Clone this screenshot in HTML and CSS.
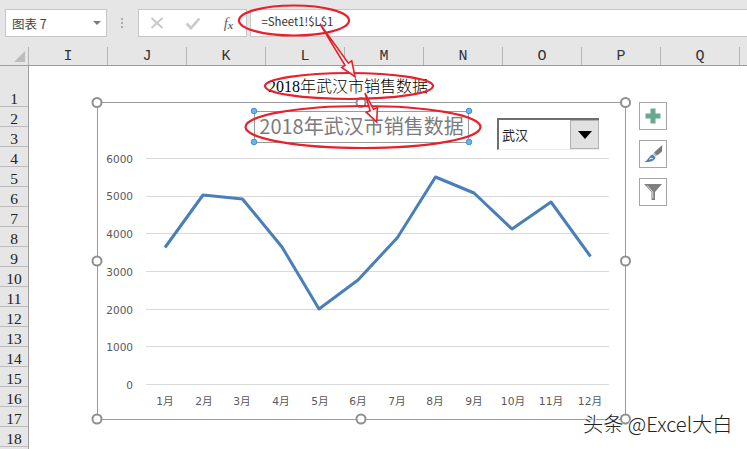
FILE: index.html
```html
<!DOCTYPE html>
<html lang="zh-CN">
<head>
<meta charset="utf-8">
<title>图表 7</title>
<link rel="stylesheet" href="styles.css">
</head>
<body>
<div class="app">
  <header class="toolbar">
    <div class="namebox"><span>图表 7</span><i class="caret"></i></div>
    <div class="grip"><i></i><i></i><i></i></div>
    <div class="fxgroup">
      <svg class="tool-icon" width="14" height="14" viewBox="0 0 14 14"><path d="M1.5 2 L12.5 12 M12.5 2 L1.5 12" stroke="#c9c9c9" stroke-width="2" fill="none"/></svg>
      <svg class="tool-icon" width="16" height="14" viewBox="0 0 16 14"><path d="M1.5 7.5 L6 12 L14.5 2.5" stroke="#c9c9c9" stroke-width="2.6" fill="none"/></svg>
      <span class="fx">f<sub>x</sub></span>
    </div>
    <div class="formula">=Sheet1!$L$1</div>
  </header>
  <div class="colhead">
    <div class="corner"><i></i></div>
    <div class="col">I</div><div class="col">J</div><div class="col">K</div><div class="col">L</div><div class="col">M</div><div class="col">N</div><div class="col">O</div><div class="col">P</div><div class="col">Q</div>
  </div>
  <div class="main">
    <div class="rowhead">
      <div class="row first">1</div><div class="row">2</div><div class="row">3</div><div class="row">4</div><div class="row">5</div><div class="row">6</div><div class="row">7</div><div class="row">8</div><div class="row">9</div><div class="row">10</div><div class="row">11</div><div class="row">12</div><div class="row">13</div><div class="row">14</div><div class="row">15</div><div class="row">16</div><div class="row">17</div><div class="row">18</div>
    </div>
    <div class="sheet">
      <div class="cell-title">2018年武汉市销售数据</div>
      <div class="chart">
        <svg class="chart-svg" width="550" height="340" viewBox="90 95 550 340">
          <g class="grid">
            <line x1="146" x2="609" y1="158.5" y2="158.5"/>
            <line x1="146" x2="609" y1="196.5" y2="196.5"/>
            <line x1="146" x2="609" y1="233.5" y2="233.5"/>
            <line x1="146" x2="609" y1="271.5" y2="271.5"/>
            <line x1="146" x2="609" y1="309.5" y2="309.5"/>
            <line x1="146" x2="609" y1="346.5" y2="346.5"/>
            <line x1="146" x2="609" y1="384.5" y2="384.5"/>
          </g>
          <g class="yaxis">
            <text x="133" y="163">6000</text>
            <text x="133" y="200">5000</text>
            <text x="133" y="238">4000</text>
            <text x="133" y="276">3000</text>
            <text x="133" y="314">2000</text>
            <text x="133" y="351">1000</text>
            <text x="133" y="389">0</text>
          </g>
          <g class="xaxis">
            <text x="165" y="405">1月</text>
            <text x="204" y="405">2月</text>
            <text x="242" y="405">3月</text>
            <text x="281" y="405">4月</text>
            <text x="320" y="405">5月</text>
            <text x="358" y="405">6月</text>
            <text x="397" y="405">7月</text>
            <text x="435" y="405">8月</text>
            <text x="474" y="405">9月</text>
            <text x="513" y="405">10月</text>
            <text x="551" y="405">11月</text>
            <text x="590" y="405">12月</text>
          </g>
          <polyline class="series" points="165,247.5 203,195 242.5,199 282,247 319,309 358,280 397.5,237.5 435.5,177 474,193 512,229 551,202 590.5,256.5"/>
          <rect class="frame" x="97.5" y="102.5" width="528" height="317"/>
          <rect class="title-box" x="254.5" y="111.5" width="214" height="31"/>
          <text class="chart-title" x="361.5" y="134">2018年武汉市销售数据</text>
          <g class="handle">
            <circle cx="97" cy="102.5" r="4.5"/><circle cx="361" cy="102.5" r="4.5"/><circle cx="625.5" cy="102.5" r="4.5"/>
            <circle cx="97" cy="261" r="4.5"/><circle cx="625.5" cy="261" r="4.5"/>
            <circle cx="97" cy="419" r="4.5"/><circle cx="361" cy="419" r="4.5"/><circle cx="625.5" cy="419" r="4.5"/>
          </g>
          <g class="handle-blue">
            <circle cx="254" cy="111" r="2.8"/><circle cx="469" cy="111" r="2.8"/>
            <circle cx="254" cy="142" r="2.8"/><circle cx="469" cy="142" r="2.8"/>
          </g>
        </svg>
        <div class="dropdown">
          <span class="dd-text">武汉</span>
          <span class="dd-btn"><i></i></span>
        </div>
        <div class="sidebtns">
          <div class="sidebtn">
            <svg width="16" height="16" viewBox="0 0 16 16"><path d="M5.5 0.5h5v5h5v5h-5v5h-5v-5h-5v-5h5z" fill="#6aa88f"/></svg>
          </div>
          <div class="sidebtn">
            <svg width="20" height="20" viewBox="0 0 20 20"><path d="M19.2 1 L19 7.5 L14.2 11.5 L11 8.5 Z" fill="#7a7a7a"/><path d="M10.5 9.5 L13 12" stroke="#8fa9c8" stroke-width="1.6"/><path d="M1 18 C5 17 5 12.5 9.5 10.5 L12.5 13.5 C11.5 17 7 18.5 1 18 Z" fill="#4a7ebb"/><path d="M6.5 15.5 C7.5 14 9 14 9.5 15" stroke="#fff" stroke-width="1.1" fill="none"/></svg>
          </div>
          <div class="sidebtn">
            <svg width="20" height="20" viewBox="0 0 20 20"><path d="M1 2 H19 L12 10 V18 H8.5 V10 Z" fill="#808080"/><path d="M4 3.4 L9.8 10 V16.5" stroke="#d9d9d9" stroke-width="1" fill="none"/></svg>
          </div>
        </div>
      </div>
    </div>
  </div>
  <svg class="notes" width="747" height="449" viewBox="0 0 747 449">
    <ellipse cx="294" cy="20.5" rx="55" ry="15"/>
    <ellipse cx="349" cy="86" rx="84" ry="13"/>
    <ellipse cx="363" cy="127" rx="117.5" ry="21"/>
    <polygon class="arrow" points="320,24 348.4,63.1 351.7,60.9 355,76.7 341.7,67.5 345,65.3"/>
    <polygon class="arrow" points="365,93 373.5,109.3 377.4,107.8 376.7,122 366.2,112.2 370.1,110.7"/>
  </svg>
  <div class="watermark">头条 @Excel大白</div>
</div>
</body>
</html>
```
FILE: styles.css
```css
* { box-sizing: border-box; }
html, body { margin: 0; padding: 0; background: #fff; }
.app {
  position: relative;
  display: flex;
  flex-direction: column;
  width: 747px;
  height: 449px;
  overflow: hidden;
  font-family: "Noto Sans CJK SC", "Liberation Sans", sans-serif;
}

/* formula bar */
.toolbar {
  display: flex;
  align-items: flex-start;
  height: 47px;
  padding: 9px 0 0 5px;
  background: #e6e6e6;
  flex: none;
}
.namebox {
  display: flex;
  align-items: center;
  justify-content: space-between;
  width: 102px;
  height: 28px;
  padding: 0 5px 0 6px;
  background: #fff;
  border: 1px solid #c6c6c6;
  font-size: 12.5px;
  color: #444;
}
.caret {
  width: 0;
  height: 0;
  border-left: 4px solid transparent;
  border-right: 4px solid transparent;
  border-top: 4px solid #7a7a7a;
}
.grip {
  display: flex;
  flex-direction: column;
  gap: 2px;
  width: 31px;
  padding: 9px 0 0 14px;
}
.grip i { width: 2px; height: 2px; background: #aaa; }
.fxgroup {
  display: flex;
  align-items: center;
  width: 110px;
  height: 28px;
  padding-left: 11px;
  background: #fff;
  border: 1px solid #c6c6c6;
}
.tool-icon { margin-right: 21px; }
.fx {
  margin-left: 2px;
  font: italic 15px "Liberation Serif", serif;
  color: #666;
}
.fx sub { font-size: 11px; vertical-align: -1px; line-height: 0; font-weight: bold; }
.formula {
  width: 498px;
  height: 28px;
  margin-left: 3px;
  padding: 2px 0 0 10px;
  background: #fff;
  border: 1px solid #c6c6c6;
  border-right: 0;
  font-size: 11.4px;
  line-height: 18px;
  color: #333;
}

/* headers */
.colhead {
  display: flex;
  height: 19px;
  flex: none;
  background: #e6e6e6;
  border-bottom: 1px solid #9c9c9c;
}
.corner {
  position: relative;
  width: 29px;
  border-right: 1px solid #b5b5b5;
  flex: none;
}
.corner i {
  display: block;
  width: 0;
  height: 0;
  margin: 4px 0 0 14px;
  border-left: 11px solid transparent;
  border-bottom: 11px solid #bdbdbd;
}
.col {
  width: 79px;
  flex: none;
  padding-top: 1px;
  border-right: 1px solid #b5b5b5;
  text-align: center;
  font: 15px/18px "Liberation Mono", monospace;
  color: #333;
}
.main { display: flex; flex: 1; min-height: 0; }
.rowhead {
  width: 29px;
  flex: none;
  background: #e6e6e6;
  border-right: 1px solid #9c9c9c;
}
.row {
  height: 20px;
  padding-top: 4px;
  border-bottom: 1px solid #bcbcbc;
  text-align: center;
  font: 15.5px/15px "Liberation Serif", serif;
  color: #222;
}
.row.first { height: 41px; padding-top: 25px; }

/* sheet */
.sheet { position: relative; flex: 1; background: #fff; }
.cell-title {
  padding: 10px 0 0 239px;
  font: 300 16px/22px "Liberation Serif", "Noto Sans CJK SC", serif;
  color: #000;
  white-space: nowrap;
}
.chart {
  position: absolute;
  left: 61px;
  top: 29px;
  width: 550px;
  height: 340px;
}
.chart-svg { display: block; overflow: visible; }
.grid line { stroke: #d9d9d9; stroke-width: 1; }
.yaxis text {
  text-anchor: end;
  font-family: "DejaVu Sans", "Noto Sans CJK SC", sans-serif;
  font-size: 10.5px;
  fill: #595959;
}
.xaxis text {
  text-anchor: middle;
  font-family: "DejaVu Sans", "Noto Sans CJK SC", sans-serif;
  font-size: 10.7px;
  fill: #595959;
}
.series {
  fill: none;
  stroke: #4a7ebb;
  stroke-width: 3;
  stroke-linejoin: round;
}
.frame { fill: none; stroke: #9a9a9a; stroke-width: 1; }
.title-box { fill: none; stroke: #9a9a9a; stroke-width: 1; }
.chart-title {
  text-anchor: middle;
  font-size: 20px;
  font-weight: 400;
  fill: #7c7c7c;
}
.handle circle { fill: #fff; stroke: #8f8f8f; stroke-width: 2; }
.handle-blue circle { fill: #6db3ee; stroke: #3f8fd8; stroke-width: 1; }
.dropdown {
  position: absolute;
  left: 407px;
  top: 23px;
  display: flex;
  width: 102px;
  height: 32px;
  background: #fff;
  border-top: 2px solid #6e6e6e;
  border-left: 2px solid #6e6e6e;
  border-bottom: 1px solid #ededed;
}
.dd-text {
  flex: 1;
  padding: 5px 0 0 3px;
  font-size: 13px;
  line-height: 20px;
  color: #222;
}
.dd-btn {
  display: flex;
  align-items: center;
  justify-content: center;
  width: 29px;
  background: #e1e1e1;
  border: 1px solid #b0b0b0;
}
.dd-btn i {
  width: 0;
  height: 0;
  border-left: 7px solid transparent;
  border-right: 7px solid transparent;
  border-top: 8px solid #000;
}
.sidebtns {
  position: absolute;
  left: 549px;
  top: 7px;
  display: flex;
  flex-direction: column;
  gap: 10px;
}
.sidebtn {
  display: flex;
  align-items: center;
  justify-content: center;
  width: 28px;
  height: 28px;
  background: #fff;
  border: 1px solid #a6a6a6;
}

/* annotations */
.notes { position: absolute; left: 0; top: 0; pointer-events: none; }
.notes ellipse { fill: none; stroke: #e8202c; stroke-width: 2.2; }
.notes .arrow { fill: rgba(255,255,255,.75); stroke: #e8202c; stroke-width: 1.6; stroke-linejoin: miter; }
.watermark {
  position: absolute;
  left: 583px;
  top: 410px;
  font-size: 20.2px;
  line-height: 28px;
  font-weight: 300;
  color: #222;
  white-space: nowrap;
  text-shadow: 0 0 2px #fff, 0 0 2px #fff, 1px 1px 0 rgba(255,255,255,.8);
}
```
